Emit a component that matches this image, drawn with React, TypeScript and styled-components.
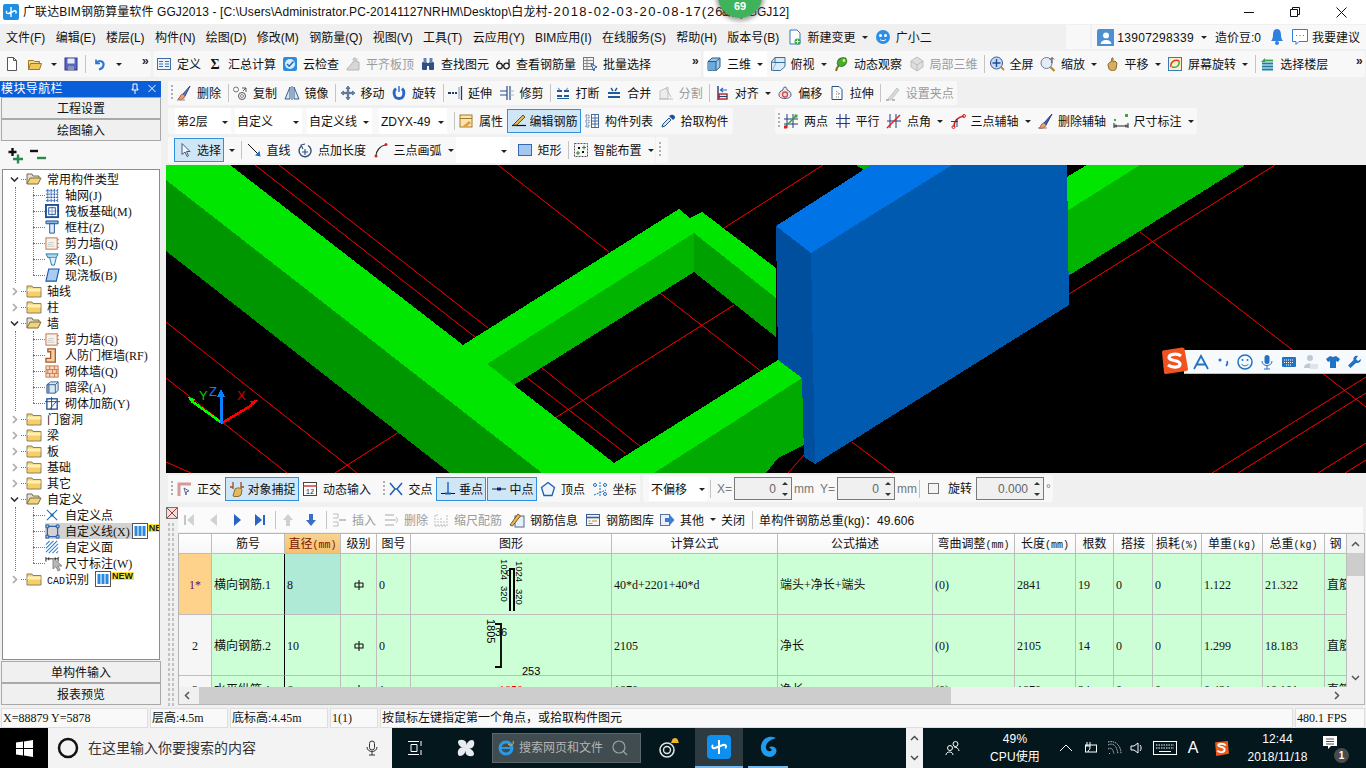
import React from "react";
import styled, { createGlobalStyle } from "styled-components";

const Global = createGlobalStyle`
  html, body { margin: 0; padding: 0; background: #f0f0f0; overflow: hidden; }
  * { box-sizing: border-box; }
`;

const UI = `"Liberation Sans", "Noto Sans CJK SC", sans-serif`;

const Window = styled.div`
  position: relative;
  width: 1366px;
  height: 768px;
  overflow: hidden;
  display: flex;
  flex-direction: column;
  background: #f0f0f0;
  color: #111;
  font: 12px/16px ${UI};
  white-space: nowrap;
`;
const TitleBar = styled.div`
  height: 24px;
  background: #fff;
  display: flex;
  align-items: center;
  padding-left: 3px;
  gap: 4px;
  font-size: 12px;
`;
const TitleText = styled.span`
  display: block;
`;
const TitleHead = styled.span`
  letter-spacing: 0.1px;
`;
const TitleSpan = styled.span<{ $ls?: number; $ml?: number; $fs?: number }>`
  letter-spacing: ${(p) => p.$ls ?? 0}px;
  margin-left: ${(p) => p.$ml ?? 0}px;
  font-size: ${(p) => p.$fs ?? 12}px;
`;
const WinControls = styled.div`
  margin-left: auto;
  padding-right: 2px;
  display: flex;
`;
const WinBtn = styled.div`
  width: 46px;
  height: 22px;
  display: flex;
  align-items: center;
  justify-content: center;
`;
const Badge = styled.div`
  position: absolute;
  left: 718px;
  top: -26px;
  width: 44px;
  height: 44px;
  border-radius: 50%;
  background: #3fb35c;
  box-shadow: 0 1px 4px 2px rgba(90, 90, 90, 0.55);
  color: #fff;
  font-weight: 700;
  font-size: 11px;
  text-align: center;
  padding-top: 25px;
  line-height: 14px;
`;
const MenuBar = styled.div`
  height: 26px;
  display: flex;
  align-items: center;
  padding-left: 6px;
  gap: 10.3px;
`;
const MenuText = styled.span`
  padding-top: 2px;
`;
const MenuTool = styled.div`
  display: flex;
  align-items: center;
  flex: none;
  gap: 5px;
  margin-left: -3px;
  & > span:not(:empty) {
    padding-top: 2px;
  }
`;
const GhostBox = styled.div`
  width: 24px;
  height: 24px;
  margin-left: auto;
  margin-right: 2px;
  background: #f8f8f8;
  flex: none;
`;
const UserBar = styled.div`
  height: 24px;
  display: flex;
  align-items: center;
  background: #f8f8f8;
  padding: 0 6px 0 5px;
  flex: none;
  margin-left: -10.3px;
`;
const PhoneText = styled.span`
  letter-spacing: 0.3px;
  margin: 2px 6px 0 3px;
`;
const UserText = styled.span<{ $ml: number; $mr: number }>`
  margin: 2px ${(p) => p.$mr}px 0 ${(p) => p.$ml}px;
`;
const IconPad = styled.span<{ $mr: number }>`
  margin-right: ${(p) => p.$mr}px;
  display: flex;
`;
const MainRow = styled.div`
  height: 30px;
  padding-top: 1px;
  display: flex;
  align-items: flex-start;
`;
const Group = styled.div<{ $w?: number; $h?: number; $ml?: number; $gap?: number; $pl?: number }>`
  display: flex;
  align-items: center;
  height: ${(p) => p.$h ?? 26}px;
  ${(p) => (p.$w ? `width:${p.$w}px;flex:none;` : "")}
  margin-left: ${(p) => p.$ml ?? 0}px;
  gap: ${(p) => p.$gap ?? 6.5}px;
  padding-left: ${(p) => p.$pl ?? 3}px;
  padding-right: 3px;
  background: #f8f8f8;
  border-radius: 2px;
`;
const Grip = styled.span`
  width: 2px;
  height: 16px;
  flex: none;
  margin-right: -3.5px;
  background: repeating-linear-gradient(to bottom, #b0b0b0 0 2px, transparent 2px 4px);
`;
const Sep = styled.span`
  width: 1px;
  height: 18px;
  flex: none;
  background: #c4c4c4;
  margin-right: -3px;
`;
const Caret = styled.span`
  width: 0;
  height: 0;
  flex: none;
  border-left: 3px solid transparent;
  border-right: 3px solid transparent;
  border-top: 3px solid #222;
  margin-left: 1px;
`;
const Tool = styled.div<{ $off?: boolean; $on?: boolean; $white?: boolean }>`
  display: flex;
  align-items: center;
  flex: none;
  gap: 5px;
  color: ${(p) => (p.$off ? "#9b9b9b" : "#111")};
  & > span:not(:empty) {
    padding-top: 2px;
  }
  ${(p) =>
    p.$on
      ? `height:24px;padding:0 2px 0 3px;margin:0 -3px 0 -3px;gap:3px;background:#cfe6f7;border:1px solid #2f8fe0;`
      : ""}
  ${(p) => (p.$white ? `height:26px;background:#fff;padding:0 4px 0 2px;margin:0 -4px 0 -2px;` : "")}
`;
const SigmaBox = styled.span`
  width: 16px;
  text-align: center;
  font: 700 14px/16px "Liberation Serif", serif;
`;
const More = styled.span`
  font: 700 12px/10px "Liberation Mono", monospace;
  height: 14px;
  color: #222;
  letter-spacing: -1px;
  margin-left: auto;
`;
const ComboRow = styled.div`
  display: flex;
  gap: 4px;
  flex: none;
`;
const Combo = styled.div<{ $w: number; $h?: number; $ml?: number }>`
  width: ${(p) => p.$w}px;
  height: ${(p) => p.$h ?? 24}px;
  margin-left: ${(p) => p.$ml ?? 0}px;
  flex: none;
  background: #fff;
  display: flex;
  align-items: center;
  justify-content: space-between;
  padding: 2px 3px 0 2px;
`;
const Workspace = styled.div`
  flex: none;
  height: 626px;
  display: flex;
`;
const Nav = styled.div`
  width: 161px;
  flex: none;
  padding-top: 1px;
  display: flex;
  flex-direction: column;
`;
const NavHead = styled.div`
  height: 16px;
  background: #0a5fd8;
  color: #fff;
  display: flex;
  align-items: center;
  padding: 0 5px 0 1px;
  justify-content: space-between;
  letter-spacing: 0.4px;
`;
const NavBtn = styled.div`
  height: 22px;
  margin: 0 0 0 1px;
  width: 160px;
  border: 1px solid #a9a9a9;
  background: #f0f0f0;
  text-align: center;
  line-height: 23px;
  font-size: 12px;
  flex: none;
`;
const NavTool = styled.div`
  height: 28px;
  display: flex;
  align-items: flex-start;
  gap: 4px;
  padding: 6px 0 0 7px;
  background: #f7f7f7;
`;
const Tree = styled.div`
  height: 491px;
  margin: 0 1px 1px 2px;
  background: #fff;
  border: 1px solid #8c8c8c;
  overflow: hidden;
  position: relative;
  padding-top: 1px;
`;
const TreeRow = styled.div`
  height: 16px;
  display: flex;
  align-items: center;
`;
const Chevron = styled.span`
  width: 13px;
  margin-left: 5px;
  flex: none;
  display: flex;
  justify-content: center;
`;
const Dots = styled.span<{ $w: number }>`
  width: ${(p) => p.$w}px;
  flex: none;
  border-top: 1px dotted #777;
`;
const TreeLabel = styled.span<{ $ml: number }>`
  margin-left: ${(p) => p.$ml}px;
  padding-top: 2px;
`;
const KidRow = styled(TreeRow)`
  padding-left: 30px;
`;
const SelWrap = styled.span<{ $sel?: boolean }>`
  display: flex;
  align-items: center;
  height: 16px;
  padding-right: 2px;
  ${(p) => (p.$sel ? "background:#d2d2d2;" : "")}
`;
const Kids = styled.div`
  position: relative;
  &::before {
    content: "";
    position: absolute;
    left: 30px;
    top: 0;
    bottom: 8px;
    border-left: 1px dotted #777;
  }
  &::after {
    content: "";
    position: absolute;
    left: 12px;
    top: 0;
    bottom: 0;
    border-left: 1px dotted #777;
  }
`;
const New = styled.span`
  background: #ffe23c;
  color: #1a1a1a;
  font: 700 9px/8px "Liberation Sans", sans-serif;
  height: 8px;
  padding: 0 1px;
  align-self: flex-start;
  margin-top: 1px;
  flex: none;
`;
const CursorMark = styled.svg`
  position: absolute;
  left: 49px;
  top: 387px;
`;
const Main = styled.div`
  margin-left: 5px;
  flex: 1;
  min-width: 0;
  padding-top: 1px;
  display: flex;
  flex-direction: column;
`;
const Row = styled.div<{ $h: number; $mb: number }>`
  height: ${(p) => p.$h}px;
  margin-bottom: ${(p) => p.$mb}px;
  display: flex;
  flex: none;
`;
const CanvasWrap = styled.div`
  position: relative;
  height: 308px;
  flex: none;
  background: #000;
  margin-bottom: 2px;
`;
const CanvasSvg = styled.svg`
  display: block;
`;
const Sogou = styled.div`
  position: absolute;
  left: 994px;
  top: 182px;
  width: 206px;
  height: 28px;
  display: flex;
  align-items: flex-end;
`;
const SogouLogo = styled.span`
  flex: none;
  z-index: 1;
  display: flex;
`;
const SogouBar = styled.div`
  margin-left: -4px;
  flex: 1;
  height: 24px;
  margin-bottom: 1px;
  background: #f7fafd;
  border-bottom: 1px solid #b4c6dc;
  display: flex;
  align-items: center;
  gap: 6px;
  padding-left: 9px;
`;
const Unit = styled.span<{ $c?: string }>`
  color: ${(p) => p.$c ?? "#777"};
  font-size: 12px;
`;
const SpinBox = styled.div<{ $w: number }>`
  width: ${(p) => p.$w}px;
  height: 23px;
  flex: none;
  border: 1px solid #7a7a7a;
  background: #f0f0f0;
  color: #666;
  display: flex;
  align-items: center;
  justify-content: flex-end;
  gap: 6px;
  padding-right: 3px;
  font-size: 12px;
`;
const SpinArrows = styled.span`
  display: flex;
  flex-direction: column;
  gap: 8px;
`;
const ArrowUp = styled.span`
  border-left: 3px solid transparent;
  border-right: 3px solid transparent;
  border-bottom: 3px solid #333;
`;
const ArrowDown = styled.span`
  border-left: 3px solid transparent;
  border-right: 3px solid transparent;
  border-top: 3px solid #333;
`;
const Check = styled.span`
  width: 11px;
  height: 11px;
  border: 1px solid #777;
  background: #f4f4f4;
  flex: none;
`;
const Space = styled.span<{ $w: number }>`
  margin-left: ${(p) => p.$w}px;
  flex: none;
`;
const RebarArea = styled.div`
  display: flex;
  flex: 1;
  min-height: 0;
`;
const Handle = styled.div`
  width: 12px;
  flex: none;
  display: flex;
  flex-direction: column;
  align-items: flex-start;
  gap: 3px;
  padding-top: 1px;
`;
const HandleDots = styled.div`
  flex: 1;
  width: 8px;
  margin-left: 1px;
  background-image: radial-gradient(#c2c2c2 1px, transparent 1px);
  background-size: 4px 5px;
`;
const RebarCol = styled.div`
  flex: 1;
  display: flex;
  flex-direction: column;
  min-width: 0;
`;
const RebarBar = styled.div`
  height: 25px;
  width: 1185px;
  margin-top: 1px;
  margin-bottom: 1px;
  background: #fbfbfb;
  display: flex;
  align-items: center;
  gap: 7px;
  padding-left: 3px;
  flex: none;
`;
const BarText = styled.span`
  padding-top: 2px;
`;
const TotalText = styled.span`
  padding-top: 2px;
  margin-left: 2px;
  letter-spacing: 0.1px;
`;
const FirstIcon = styled.span`
  display: flex;
  margin-right: 2px;
`;
const IconCell = styled.span<{ $w: number }>`
  width: ${(p) => p.$w}px;
  flex: none;
  display: flex;
  justify-content: center;
`;
const TableFrame = styled.div`
  width: 1187px;
  height: 172px;
  border: 1px solid #b5b5b5;
  margin-left: 0;
  flex: none;
  background: #fff;
  display: flex;
  flex-direction: column;
`;
const TableTop = styled.div`
  height: 153px;
  display: flex;
  flex: none;
`;
const GridBox = styled.div`
  width: 1168px;
  flex: none;
  overflow: hidden;
`;
const COLS = "33px 73px 56px 36px 34px 201px 166px 155px 82px 61px 38px 39px 49px 61px 62px 22px";
const TRow = styled.div<{ $h: number }>`
  display: grid;
  grid-template-columns: ${COLS};
  height: ${(p) => p.$h}px;
`;
const Th = styled.div<{ $active?: boolean }>`
  background: ${(p) => (p.$active ? "linear-gradient(#f8d491,#f5c070)" : "linear-gradient(#fff,#f6f6f6)")};
  color: ${(p) => (p.$active ? "#7a1500" : "#111")};
  border-right: 1px solid #bdbdbd;
  border-bottom: 1px solid #bdbdbd;
  text-align: center;
  line-height: 21px;
  overflow: hidden;
`;
const Td = styled.div<{ $bg?: string; $center?: boolean; $split?: boolean }>`
  background: ${(p) => p.$bg ?? "#ccffd5"};
  border-right: 1px solid ${(p) => (p.$split ? "#000" : "#bdbdbd")};
  border-bottom: 1px solid #bdbdbd;
  display: flex;
  align-items: center;
  justify-content: ${(p) => (p.$center ? "center" : "flex-start")};
  padding-left: ${(p) => (p.$center ? 0 : 2)}px;
  padding-top: 1px;
  overflow: hidden;
  position: relative;
`;
const VScroll = styled.div`
  width: 17px;
  background: #f0f0f0;
  display: flex;
  flex-direction: column;
  align-items: center;
  padding: 7px 0 6px;
`;
const VThumb = styled.div`
  width: 17px;
  height: 23px;
  background: #cdcdcd;
  margin-top: 6px;
  margin-bottom: auto;
`;
const HScroll = styled.div`
  height: 17px;
  flex: none;
  background: #f0f0f0;
  display: flex;
  align-items: center;
  padding: 0 24px 0 5px;
`;
const HThumb = styled.div`
  width: 752px;
  height: 17px;
  background: #cdcdcd;
  margin-left: 9px;
  margin-right: auto;
`;
const StatusBar = styled.div`
  height: 20px;
  margin-top: 2px;
  flex: none;
  display: flex;
  gap: 2px;
  padding-left: 1px;
`;
const StatusCell = styled.div<{ $w: number }>`
  width: ${(p) => p.$w}px;
  flex: none;
  background: #f9f9f9;
  border: 1px solid #dedede;
  padding-left: 1px;
  line-height: 19px;
`;
const Taskbar = styled.div`
  height: 40px;
  flex: none;
  display: flex;
  align-items: center;
  background: #03171d;
  color: #fff;
`;
const Start = styled.div`
  width: 48px;
  height: 40px;
  background: #000;
  display: flex;
  align-items: center;
  justify-content: center;
`;
const Search = styled.div`
  width: 344px;
  height: 40px;
  background: #f3f3f3;
  color: #333;
  display: flex;
  align-items: center;
  font-size: 14px;
  padding-left: 9px;
  gap: 9px;
`;
const MicBox = styled.span`
  margin-left: auto;
  margin-right: 12px;
  display: flex;
`;
const TaskItem = styled.div<{ $w: number; $ml?: number; $active?: boolean; $under?: boolean }>`
  width: ${(p) => p.$w}px;
  height: 40px;
  margin-left: ${(p) => p.$ml ?? 0}px;
  flex: none;
  display: flex;
  align-items: center;
  justify-content: center;
  ${(p) => (p.$active ? "background:#2d3b41;" : "")}
  ${(p) => (p.$under ? "border-bottom:2px solid #76b9ed;" : "")}
`;
const IESearch = styled.div`
  width: 149px;
  height: 30px;
  margin-left: 2px;
  flex: none;
  background: #414c50;
  border: 1px solid #5c676b;
  color: #b5b5b5;
  display: flex;
  align-items: center;
  padding-left: 3px;
  gap: 3px;
  font-size: 12px;
`;
const ScrollBox = styled.div`
  width: 17px;
  height: 40px;
  margin-left: 118px;
  background: #f2f2f2;
  display: flex;
  flex-direction: column;
  align-items: center;
  justify-content: space-around;
`;
const TwoLine = styled.div<{ $w: number; $ml: number }>`
  width: ${(p) => p.$w}px;
  margin-left: ${(p) => p.$ml}px;
  flex: none;
  text-align: center;
  line-height: 18px;
  font-size: 12px;
  letter-spacing: 0.1px;
`;
const BigA = styled.span`
  font-size: 16px;
  width: 16px;
  margin-left: 8px;
  flex: none;
  text-align: center;
`;
const Notify = styled.div`
  position: relative;
  width: 24px;
  margin-left: 12px;
  height: 30px;
`;
const NotifyCount = styled.span`
  position: absolute;
  right: -3px;
  bottom: 0;
  width: 15px;
  height: 15px;
  border-radius: 50%;
  background: #4a4a4a;
  color: #fff;
  font-size: 10px;
  line-height: 15px;
  text-align: center;
  font-weight: 700;
`;
const Lat = styled.span`
  font: 12px/14px "Liberation Serif", serif;
`;
const MonoLat = styled.span`
  font: 10px/12px "Liberation Mono", monospace;
`;

const mix = (s: string) =>
  s.split(/([\x00-\x7f]+)/).map((p, i) => (i % 2 ? <Lat key={i}>{p}</Lat> : p));

const Svg = ({ s = 16, w, h, vb = "0 0 16 16", children }: { s?: number; w?: number; h?: number; vb?: string; children: React.ReactNode }) => (
  <svg width={w ?? s} height={h ?? s} viewBox={vb} style={{ flex: "none", display: "block" }} fill="none">
    {children}
  </svg>
);

const ICONS: Record<string, React.ReactNode> = {
  doc: <path d="M3.5 1.5h6l3 3v10h-9z M9.5 1.5v3h3" fill="#fff" stroke="#555" />,
  open: <><path d="M1.5 13.5v-9h5l1 1h5v2" fill="#f3d98c" stroke="#9a7a26" /><path d="M1.5 13.5l2-6h11l-2 6z" fill="#f1c65b" stroke="#9a7a26" /></>,
  save: <><rect x="2" y="2" width="12" height="12" fill="#5a67c8" stroke="#2d367e" /><rect x="4.5" y="2.5" width="7" height="5" fill="#e8ecfa" /><rect x="5" y="10" width="6" height="4" fill="#8d93a8" /></>,
  undo: <><path d="M5 3.5v4h4" stroke="#2d6fc4" strokeWidth="1.6" /><path d="M5.5 7C8 3.5 13 5 12.5 9c-.3 2.4-2 3.8-4.5 4.5" stroke="#2d7bd8" strokeWidth="2.2" /></>,
  define: <><rect x="1.5" y="2.5" width="13" height="11" fill="#eaf1fa" stroke="#3f6fa8" /><path d="M3 5.5h4M3 8h4M3 10.5h4M9 5.5h4M9 8h4M9 10.5h4" stroke="#3f6fa8" /></>,
  cloud: <><rect x="1" y="1" width="14" height="14" rx="2" fill="#2c8ddf" /><circle cx="8" cy="8" r="5" fill="#d8eefc" /><path d="M5 8l2.2 2.2L11.5 5.5" stroke="#1d6fc0" strokeWidth="1.6" /></>,
  flat: <><path d="M2 13l7-8 5 1v8H2z" fill="#d7d7d7" stroke="#b5b5b5" /><path d="M9 1l4 2-2 3-4-2z" fill="#c8c8c8" /></>,
  binoc: <><rect x="2" y="6" width="5" height="8" rx="1" fill="#30507f" /><rect x="9" y="6" width="5" height="8" rx="1" fill="#30507f" /><rect x="3.5" y="2" width="3" height="5" fill="#6783ad" /><rect x="9.5" y="2" width="3" height="5" fill="#6783ad" /><rect x="7" y="7" width="2" height="3" fill="#30507f" /></>,
  glass: <><circle cx="4.5" cy="10" r="2.8" stroke="#222" strokeWidth="1.3" /><circle cx="11.5" cy="10" r="2.8" stroke="#222" strokeWidth="1.3" /><path d="M7 9.5h2M2 9C2.500 6 3.500 5 5 5M14 9V3" stroke="#222" strokeWidth="1.2" /></>,
  batch: <><rect x="1.500" y="1.500" width="10" height="12" fill="#f3f3f3" stroke="#777" /><path d="M1.500 4.500h10M1.500 7.500h10M1.500 10.500h10M5 1.500v12" stroke="#888" /><path d="M9 8l6 3-2.500 1L12 15z" fill="#fff" stroke="#2f5c99" /></>,
  cube: <><path d="M2 5.500l4-3.500h8v9l-4 3.500H2z" fill="#9cc8e8" stroke="#2e5e88" /><path d="M2 5.500h8v9H2z" fill="#6fa8d4" /><path d="M2 5.500h8v9M10 5.500l4-3.500" stroke="#2e5e88" /></>,
  top: <><path d="M5 1.500h10v9l-4.500 4H1.500v-9z" fill="#dbeaf6" stroke="#3b6e98" /><path d="M5 1.500v5l-3.500-.5M5 6.500h10" stroke="#3b6e98" /><path d="M2 15l4-8" stroke="#8ab2d0" /></>,
  orbit: <><path d="M3 15c1-5 5-9 10-13" stroke="#6d7a2d" strokeWidth="2" /><ellipse cx="9" cy="6" rx="5" ry="4" fill="#46ad34" stroke="#2d7a22" transform="rotate(-30 9 6)" /><circle cx="11" cy="4.500" r="1.400" fill="#e8f54a" /></>,
  local: <><path d="M8 1l6 4v6l-6 4-6-4V5z" fill="#dedede" stroke="#bdbdbd" /><path d="M2 5l6 4 6-4M8 9v6" stroke="#bdbdbd" /></>,
  full: <><circle cx="7.500" cy="7" r="6" fill="#c8daf2" stroke="#385a90" /><path d="M7.500 3v8M3.500 7h8" stroke="#1d4d9c" strokeWidth="1.400" /><path d="M12 11l3 3" stroke="#c88d2a" strokeWidth="2" /></>,
  zoom: <><circle cx="6.500" cy="7" r="5.500" fill="#e4ecf6" stroke="#6a7f98" /><path d="M10.500 11l4 4" stroke="#b48422" strokeWidth="2.200" /><path d="M12 2v5M10 3.500l2-2 2 2" stroke="#444" /></>,
  pan: <><path d="M4 9c0-2 2-3 3-3l1-4 1 0 0 4 2-1 1 1 1 1-1 6c-1 2-6 2-7 0z" fill="#d9ad5e" stroke="#8a6a2c" /></>,
  srot: <><rect x="1.500" y="1.500" width="13" height="13" fill="#fbeec4" stroke="#3a79b8" /><path d="M4 11C3 6 8 3 12 5" stroke="#d8392c" strokeWidth="1.500" /><path d="M12 5c1 5-3 7-7 6" stroke="#3cae54" strokeWidth="1.500" /></>,
  floors: <><path d="M3 13.500h11M3 10.500h11M3 7.500h11" stroke="#1f7ea3" strokeWidth="1.800" /><path d="M5 4.500h9" stroke="#36a04a" strokeWidth="1.800" /><path d="M6 2L2 6l4 0" fill="#36a04a" /></>,
  erase: <><path d="M14 1L7 9l2 2z" fill="#5975c9" stroke="#2d4690" /><path d="M7 9c-2 0-3 2-3 3l-2 2c3 1 6 0 7-3z" fill="#e0a080" stroke="#b45c3c" /><path d="M1 15h8" stroke="#888" /></>,
  copy: <><circle cx="4" cy="4.500" r="2.500" stroke="#777" /><circle cx="10" cy="11" r="3.500" stroke="#555" /><circle cx="10" cy="11" r="1.500" stroke="#888" /><path d="M10 3h4v4M14 3l-3 3" stroke="#555" /></>,
  mirror: <><path d="M6 2L1 14h5zM10 2l5 12h-5z" fill="#d8e4f0" stroke="#33608f" /><path d="M8 1v14" stroke="#33608f" /></>,
  move: <path d="M8 1l2 2.500H8.700V7.300H12.500V6L15 8l-2.500 2V8.700H8.700v3.800H10L8 15l-2-2.500h1.300V8.700H3.500V10L1 8l2.500-2v1.300h3.800V3.500H6z" fill="#6f89ad" stroke="#2f4d73" strokeWidth=".6" />,
  rotate: <><path d="M5 3.500C1.800 6 2.500 13.500 8 13.500s6-7.500 3-10" stroke="#2a66c9" strokeWidth="2.800" /><path d="M8 1v6" stroke="#2a66c9" strokeWidth="1.400" /></>,
  extend: <><path d="M14.500 1v14" stroke="#1f3d70" strokeWidth="1.300" /><path d="M12 2v12" stroke="#7d94b6" /><path d="M1 8h3" stroke="#1f3d70" strokeWidth="2" /><path d="M5 8h2M8 8h2" stroke="#1f3d70" strokeWidth="2" strokeDasharray="2 1" /></>,
  trim: <><path d="M8 1v14M11 1v14" stroke="#2a4f86" strokeWidth="1.200" /><path d="M1 6h7M1 10h7" stroke="#2a4f86" strokeWidth="1.200" /><path d="M11 6h4M11 10h4" stroke="#9fb2cd" strokeWidth="1.200" /></>,
  brk: <><path d="M2 6h5M9 6h5M2 11h5M9 11h5" stroke="#1f5a99" strokeWidth="1.800" /><path d="M3 3l2 2M13 3l-2 2" stroke="#7aa3cf" strokeWidth="1.200" /><path d="M2 13.500h12" stroke="#1f5a99" /></>,
  merge: <><path d="M2 8h12M2 12h12" stroke="#1f5a99" strokeWidth="1.800" /><path d="M5 3l2 3M11 3l-2 3" stroke="#1f5a99" strokeWidth="1.400" /></>,
  split: <><path d="M2 14V6l8-4v12z" fill="#ececec" stroke="#c4c4c4" /><path d="M1 14h14M8 3l5 9" stroke="#bdbdbd" /></>,
  align: <><path d="M4 1v14" stroke="#1f3d70" strokeWidth="1.400" /><rect x="5" y="9" width="8" height="5" fill="#fff" stroke="#b02020" strokeWidth="1.400" /><path d="M13 5H7M9 3L6.500 5 9 7" stroke="#2a66c9" strokeWidth="1.200" /><path d="M5 11.500h8" stroke="#1f3d70" strokeWidth="1.200" /></>,
  offset: <><path d="M8 2c2 0 2 3 2 3 3 1 4 3 4 5s-2 3.500-6 3.500S2 12 2 10s1-4 4-5c0 0 0-3 2-3z" fill="#f8e0e0" stroke="#3a5f95" /><circle cx="8" cy="9.500" r="2.500" stroke="#d8483c" strokeWidth="1.300" /></>,
  stretch: <><path d="M3 1.500h7l3 3v10H3z" fill="#fff" stroke="#26508a" /><path d="M7 6l4 3M7 9h3M7 12h3" stroke="#777" strokeDasharray="1 1" /></>,
  gripset: <><path d="M3 14L12 3l2 2-8 10z" fill="#d8d8d8" stroke="#c4c4c4" /><path d="M1 15h3M7 15h3" stroke="#b8b8b8" strokeWidth="2" /></>,
  attr: <><rect x="2" y="2" width="12" height="12" fill="#fbe6b0" stroke="#a57a26" /><path d="M2 5.500h12" stroke="#a57a26" /><path d="M5 13l6-5 2 2-5 4z" fill="#e89a3c" /></>,
  edit: <><path d="M1 12.500h14" stroke="#111" strokeWidth="1.200" /><path d="M2 12L12 2l2 2L6 12z" fill="#e7b757" stroke="#6a4f12" /></>,
  list: <><path d="M2 2h3v3H2zM2 7h3v3H2zM2 12h3v2H2z" stroke="#4a6a99" strokeDasharray="1 .6" /><rect x="7.500" y="1.500" width="7" height="13" fill="#fff" stroke="#4a6a99" /><path d="M7.500 5h7M7.500 8h7M7.500 11h7M11 1.500v13" stroke="#4a6a99" /></>,
  pick: <><path d="M2 14l1-3 6-6 2 2-6 6z" fill="#d4e6f8" stroke="#204f8a" /><path d="M9 3l4 4 1.500-1.500c1-1 .5-2-.5-3s-2-1-3-.5z" fill="#1d4f9c" /></>,
  two: <><path d="M4 1v14M10 1v14M1 6h14M1 11h14" stroke="#243a80" /><path d="M2 14L13 3" stroke="#3d9c38" strokeWidth="1.400" /><rect x="1" y="12.500" width="3" height="3" fill="#d22" /><rect x="11.500" y="1.500" width="3" height="3" fill="#3ba53a" /></>,
  par: <path d="M5 1v14M11 1v14M1 5.500h14M1 10.500h14" stroke="#243a80" strokeWidth="1.100" />,
  ang: <><path d="M4 1v14M10 1v14M1 8h14" stroke="#243a80" /><path d="M1 15L14 2" stroke="#d22" strokeWidth="1.500" /></>,
  arc3: <><path d="M4 14C4 8 8 4 14 3" stroke="#c22" strokeWidth="1.500" /><path d="M1 8.500h7M7 14V6" stroke="#243a80" /><circle cx="3.500" cy="14" r="1.500" stroke="#d22" /><circle cx="14" cy="3" r="1.500" stroke="#d22" /></>,
  delax: <><path d="M15 1L7 10l2 2z" fill="#3f62bd" stroke="#233e86" /><path d="M7 10c-2 0-3 2-3 3l-2 2c3 1 6 0 7-3z" fill="#dfa37e" stroke="#b45c3c" /><path d="M1 15h9" stroke="#888" /></>,
  dim: <><path d="M1 10v5M15 10v5M1 13h14" stroke="#222" /><path d="M3 11.500v3M13 11.500v3" stroke="#222" /><rect x="1" y="6" width="2" height="2" fill="#3ba53a" /><rect x="12" y="1" width="3" height="3" fill="#3ba53a" /></>,
  cursor: <path d="M4 1.500v11l3-2.500 2 4.500 1.500-.7-2-4.300h3.500z" fill="#f2f6fb" stroke="#45597a" />,
  line: <><path d="M2 2l10.500 10.500" stroke="#111" strokeWidth="1" /><path d="M14.500 14.500L13.600 9 9 13.600z" fill="#1f6fc4" /></>,
  ptlen: <><path d="M11 3.500a6 6 0 1 1-7 .8" stroke="#2f4d73" strokeWidth="1.400" /><path d="M8 2L4 3l2 4M8 7v6M5 10h6" stroke="#2f4d73" strokeWidth="1.100" /></>,
  arc: <><path d="M3 14C3 9 7 4 12 3" stroke="#333" strokeWidth="1.200" /><circle cx="3" cy="14" r="1.500" fill="#d22" /><circle cx="13" cy="2.500" r="1.500" fill="#d22" /></>,
  rect: <rect x="1.500" y="2.500" width="13" height="11" fill="#a5c7ef" stroke="#3369b5" />,
  smart: <><rect x="1.500" y="1.500" width="13" height="13" fill="#f6f6f6" stroke="#555" strokeDasharray="2 1" /><path d="M5 5h2v2H5zM9 9h2v2H9z" fill="#111" /><path d="M11 3.500v4M9 5.500h4M5 9v4M3 11h4" stroke="#1b8a2e" /></>,
  ortho: <><path d="M3 15V3h12" stroke="#d59a9a" strokeWidth="3" /><path d="M8 7l5 3-2.500.8L10 14z" fill="#fff" stroke="#5a6b8c" /></>,
  snap: <><path d="M4 1v7M12 1v7M1 6h3M12 6h3" stroke="#a54a1c" strokeWidth="1.300" /><path d="M4 15l2-7c3-2 6-1 7 1l-1 5c-2 2-6 2-8 1z" fill="#e4b95e" stroke="#8a6a2c" /></>,
  dyn: <><rect x="1.500" y="1.500" width="13" height="13" fill="#fff" stroke="#444" /><path d="M1.500 5h13" stroke="#d44" strokeWidth="1.600" /><text x="8" y="13" textAnchor="middle" fontSize="7" fill="#222" fontFamily="Liberation Mono">12</text></>,
  cross: <path d="M2 2l5 6-5 6M14 2L9 8l5 6M7 8h2" stroke="#1e5fb4" strokeWidth="1.500" />,
  perp: <><path d="M8 1v11" stroke="#1f5fb0" strokeWidth="1.400" /><path d="M1 12.500h14" stroke="#111" /><path d="M5 12.500h6" stroke="#1f5fb0" strokeWidth="2" /></>,
  mid: <><path d="M1 8h14" stroke="#33465f" strokeWidth="1.200" /><rect x="6" y="6.500" width="4" height="3" fill="#111e6d" /></>,
  vertex: <path d="M8 1.500l6.500 5-2.500 8H4l-2.500-8z" fill="#eef4fb" stroke="#1e5fb4" strokeWidth="1.300" />,
  coord: <><path d="M8 1v14M2 14l12-5" stroke="#1e6fc4" strokeDasharray="2 1" /><circle cx="3" cy="4" r="1.500" stroke="#1e6fc4" /><circle cx="13" cy="4" r="1.500" stroke="#1e6fc4" /><circle cx="13" cy="13" r="1.500" stroke="#1e6fc4" /></>,
  first: <><path d="M4 3v10" stroke="#c5c5c5" strokeWidth="2" /><path d="M13 2L6 8l7 6z" fill="#d2d2d2" /></>,
  prev: <path d="M11 2L4 8l7 6z" fill="#d2d2d2" />,
  next: <path d="M5 2l7 6-7 6z" fill="#2a63c4" />,
  last: <><path d="M3 2l7 6-7 6z" fill="#2a63c4" /><path d="M12 3v10" stroke="#2a63c4" strokeWidth="2" /></>,
  up: <path d="M8 2l5 6H10v6H6V8H3z" fill="#d0d0d0" />,
  down: <path d="M8 14l5-6H10V2H6v6H3z" fill="#3a6fc9" />,
  insert: <><path d="M2 2h5v4H2M2 10h5v4H2" stroke="#bdbdbd" /><path d="M8 8h7" stroke="#c4c4c4" strokeWidth="2" /></>,
  del: <><path d="M2 3h9M2 8h11M2 13h9" stroke="#c4c4c4" strokeWidth="1.500" /><path d="M13 5l2 3-2 3" stroke="#c4c4c4" /></>,
  scale: <path d="M2 14V3h3M2 14h12M5 14V7M8 14V5M11 14V8M14 14V2" stroke="#bdbdbd" strokeDasharray="2 1" />,
  info: <><rect x="6" y="4" width="9" height="11" fill="#e9eef7" stroke="#4a6a99" /><path d="M1 13L9 2l2.500 2-8 10z" fill="#e6b860" stroke="#7a5d1c" /></>,
  lib: <><rect x="1.500" y="2.500" width="13" height="11" fill="#f5f5f5" stroke="#3a5f95" /><path d="M1.500 5.500h13" stroke="#3a5f95" strokeWidth="1.600" /><path d="M3.500 9h2M7 9h5M3.500 11.500h4" stroke="#c48a2c" /></>,
  other: <><rect x="1.500" y="2.500" width="9" height="11" fill="#e9eef7" stroke="#5a7198" /><path d="M6 6h5V3l4.500 5L11 13v-3H6z" fill="#3c7dd8" /></>,
  closeX: <><rect x=".5" y=".5" width="11" height="11" fill="#f2dddd" stroke="#777" /><path d="M1 1l10 10M11 1L1 11" stroke="#a33" /></>,
};
const Ic = ({ n, s }: { n: string; s?: number }) => <Svg s={s}>{ICONS[n]}</Svg>;

const TREE: Record<string, React.ReactNode> = {
  grid: <><path d="M1 3h13M1 6.500h13M1 10h13M1 13.500h13M3 1v14M6.500 1v14M10 1v14M13.500 1v14" stroke="#1e55a8" strokeDasharray="2 .6" /></>,
  raft: <><rect x="1" y="1" width="13" height="13" stroke="#1e4f98" strokeWidth="2" /><rect x="4" y="4" width="7" height="7" fill="#fff" stroke="#1e4f98" /><path d="M1 7.500h13M7.500 1v13" stroke="#1e4f98" strokeDasharray="1 1" /></>,
  col: <><path d="M1 1h13v3H1z" fill="#8ab3de" stroke="#1e4f98" /><path d="M5 4h5v10H5z" fill="#dfeafa" stroke="#1e4f98" /></>,
  shear: <><rect x="1" y="2" width="12" height="12" fill="#f8f2ec" stroke="#c07040" /><path d="M3 11h8M3 9h6M4 7h5" stroke="#aaa" strokeDasharray="1 1" /><path d="M13 4h2M13 8h2M13 12h2" stroke="#e07030" /></>,
  beam: <><path d="M1 2h13l-2 4H3z" fill="#a8d4ec" stroke="#1e79a8" /><path d="M5 6l2 8h3l2-8" fill="#dff0fa" stroke="#1e79a8" /></>,
  slab: <path d="M4 1h11l-3 13H1z" fill="#a9ccf2" stroke="#1e55a8" strokeWidth="1.200" />,
  door: <path d="M3 1h8v14H1v-4h5V4H3z" fill="#f5cfa8" stroke="#a85a28" strokeWidth="1.400" />,
  brick: <><rect x="1" y="2" width="13" height="12" fill="#f7d8c0" stroke="#c87848" /><path d="M1 6h13M1 10h13M5 2v4M10 2v4M3 6v4M8 6v4M12 6v4M5 10v4M10 10v4" stroke="#c87848" /></>,
  dark: <><path d="M2 5l4-3h8v9l-3 3H2z" fill="#dbe8f4" stroke="#33608f" /><path d="M2 5h3v9H2z" fill="#6a8fb5" /><path d="M2 5h9v9M11 5l3-3" stroke="#33608f" /></>,
  rein: <><rect x="2" y="3" width="11" height="11" stroke="#1e4f98" strokeWidth="1.400" /><path d="M0 6h16M5 14l7-8M7 1v14" stroke="#1e4f98" /></>,
  xpt: <><path d="M2 2l11 11M13 2L2 13" stroke="#1f6fb8" strokeWidth="1.200" /><rect x="6" y="6" width="3" height="3" fill="#1f6fb8" /></>,
  xline: <><rect x="2.500" y="2.500" width="11" height="11" stroke="#1e55a8" strokeWidth="1.200" /><path d="M1 1h3v3H1zM12 1h3v3h-3zM1 12h3v3H1zM12 12h3v3h-3z" fill="#a8c4f0" stroke="#1e55a8" /></>,
  xface: <><rect x="1" y="1" width="13" height="13" fill="#fff" /><path d="M1 5l4-4M1 9l8-8M1 13L13 1M4 14L14 4M8 14l6-6M12 14l2-2" stroke="#2a78d0" strokeWidth="1.100" /></>,
  dim2: <path d="M1 1v5M14 1v5M1 3h13M4 1.500v3M11 1.500v3" stroke="#222" />,
};

const Folder = ({ open }: { open?: boolean }) =>
  open ? (
    <Svg s={16}>
      <path d="M1 13V3h5l1 2h6v2" fill="#e8e0c8" stroke="#6d6a5d" />
      <path d="M1 13l3-6h11l-3 6z" fill="#f2d27a" stroke="#7d6d3d" />
    </Svg>
  ) : (
    <Svg s={16}>
      <path d="M1 3h5l1 1.500h8V14H1z" fill="#f7cf62" stroke="#8a8168" />
      <path d="M1.500 5.500h13v3h-13z" fill="#fff1bd" />
    </Svg>
  );
const ChevIcon = ({ open }: { open?: boolean }) => (
  <Svg w={9} h={9} vb="0 0 9 9">
    <path d={open ? "M1 2.500l3.500 3.500L8 2.500" : "M3 1l3.500 3.500L3 8"} stroke={open ? "#333" : "#aaa"} strokeWidth="1.600" />
  </Svg>
);
const Cols = () => (
  <Svg s={16}>
    <rect x=".5" y=".5" width="15" height="15" fill="#fff" stroke="#555" />
    <path d="M2.500 3h3v10h-3zM6.500 3h3v10h-3zM10.500 3h3v10h-3z" fill="#2a8ae0" />
  </Svg>
);
const Root = ({ label, open, extra }: { label: React.ReactNode; open?: boolean; extra?: React.ReactNode }) => (
  <TreeRow>
    <Chevron><ChevIcon open={open} /></Chevron>
    <Dots $w={5} />
    <Folder open={open} />
    <TreeLabel $ml={5}>{label}</TreeLabel>
    {extra}
  </TreeRow>
);
const Kid = ({ icon, label, sel, extra }: { icon: string; label: string; sel?: boolean; extra?: React.ReactNode }) => (
  <KidRow>
    <Dots $w={12} />
    <SelWrap $sel={sel}>
      <Svg s={15}>{TREE[icon]}</Svg>
      <TreeLabel $ml={5}>{mix(label)}</TreeLabel>
    </SelWrap>
    {extra}
  </KidRow>
);

const T = ({ i, t, caret, off, on, white }: { i: string; t: string; caret?: boolean; off?: boolean; on?: boolean; white?: boolean }) => (
  <Tool $off={off} $on={on} $white={white}>
    <Ic n={i} />
    <span>{t}</span>
    {caret && <Caret />}
  </Tool>
);

const Axis = () => (
  <g>
    <path d="M56 258L27 237" stroke="#00ff00" strokeWidth="2.500" />
    <path d="M22 232l7 2-3 5z" fill="#00ff00" />
    <path d="M56 258L86 240" stroke="#ff0000" strokeWidth="2.500" />
    <path d="M92 235l-8 1 3 5z" fill="#ff0000" />
    <path d="M55 258V231" stroke="#0a82ff" strokeWidth="3" />
    <path d="M55 224l-4 8h8z" fill="#0a82ff" />
    <text x="33" y="235" fill="#00d000" fontSize="13" fontFamily="Liberation Sans">Y</text>
    <text x="43" y="231" fill="#0a82ff" fontSize="13" fontFamily="Liberation Sans">Z</text>
    <text x="71" y="235" fill="#d00000" fontSize="13" fontFamily="Liberation Sans">X</text>
  </g>
);

const RED: number[][] = [
  [89, 0, 309, 172], [113, 0, 322, 163], [332, 0, 443, 87], [494, 128, 596, 207], [686, 277, 727, 308],
  [657, 0, 558, 63], [568, 140, 389, 253], [233, 267, 169, 308], [638, 290, 622, 308],
  [376, 203, 475, 282], [360, 212, 459, 288], [0, 157, 191, 308], [0, 213, 121, 308], [0, 297, 25, 308],
  [1109, 0, 903, 129], [974, 67, 1200, 242], [1200, 212, 1046, 308], [1200, 228, 1072, 308],
  [1200, 278, 1152, 308], [1200, 295, 1179, 308],
];

const Canvas = () => (
  <CanvasSvg width={1200} height={308} viewBox="0 0 1200 308" shapeRendering="crispEdges">
    <rect width="1200" height="308" fill="#000" />
    {RED.map((r, i) => (
      <line key={i} x1={r[0]} y1={r[1]} x2={r[2]} y2={r[3]} stroke="#ff0000" strokeWidth="1" shapeRendering="auto" />
    ))}
    <polygon points="0,15 0,86 284,308 376,308" fill="#009600" />
    <polygon points="321,199 528,68 528,107 348,220" fill="#00b400" />
    <polygon points="297,180 513,44 528,68 321,199" fill="#00e600" />
    <polygon points="528,68 610,133 610,172 528,107" fill="#00a000" />
    <polygon points="513,44 524,53 536,47 610,103 610,133 528,68" fill="#00e600" />
    <polygon points="636,213 488,308 600,308 612,293 638,280" fill="#00aa00" />
    <polygon points="0,0 64,0 297,180 348,220 448,298 612,195 636,213 488,308 376,308 0,15" fill="#00e600" />
    <polygon points="690,0 705,0 698,5" fill="#00b400" />
    <polygon points="901,46 974,0 1079,0 902,111" fill="#00b400" />
    <polygon points="901,12 921,0 974,0 901,46" fill="#00e600" />
    <polygon points="610,61 645,88 649,299 638,292 636,213 612,195" fill="#004f9e" />
    <polygon points="610,61 705,0 786,0 645,88" fill="#0073e6" />
    <polygon points="645,88 786,0 901,0 903,140 649,299" fill="#005ab0" />
    <Axis />
  </CanvasSvg>
);

const headers = ["", "筋号", "直径(mm)", "级别", "图号", "图形", "计算公式", "公式描述", "弯曲调整(mm)", "长度(mm)", "根数", "搭接", "损耗(%)", "单重(kg)", "总重(kg)", "钢"];
const headerText = (s: string) =>
  s.split(/(\(.*\))/).map((p, i) => (i % 2 ? <MonoLat key={i}>{p}</MonoLat> : p));

const Grade = () => (
  <Svg w={10} h={10} vb="0 0 10 10">
    <path d="M5 0v10M1 3v4h8V3M1 3h8" stroke="#111" strokeWidth="1.100" />
  </Svg>
);

const ShapeOne = () => (
  <Svg w={200} h={60} vb="0 0 200 60">
    <path d="M99 56V14h4v42" stroke="#000" strokeWidth="2" />
    <g fontFamily="Liberation Sans" fontSize="9.500" fill="#000">
      <text transform="translate(90,4) rotate(90)">1024</text>
      <text transform="translate(90,31) rotate(90)">320</text>
      <text transform="translate(105,6) rotate(90)">1024</text>
      <text transform="translate(105,34) rotate(90)">320</text>
      <text x="95" y="21">0</text>
    </g>
  </Svg>
);
const ShapeTwo = () => (
  <Svg w={200} h={60} vb="0 0 200 60">
    <path d="M84 8h6v43h-6" stroke="#000" strokeWidth="1.800" />
    <g fontFamily="Liberation Sans" fontSize="11" fill="#000">
      <text transform="translate(76,3) rotate(90)">1805</text>
      <text x="84" y="20">36</text>
      <text x="111" y="59">253</text>
    </g>
  </Svg>
);

type RowData = { num: string; bg?: string; h: number; cells: React.ReactNode[] };
const rows: RowData[] = [
  {
    num: "1*", bg: "#ffd28c", h: 61,
    cells: ["横向钢筋.1", "8", <Grade />, "0", <ShapeOne />, "40*d+2201+40*d", "端头+净长+端头", "(0)", "2841", "19", "0", "0", "1.122", "21.322", "直筋"],
  },
  {
    num: "2", h: 61,
    cells: ["横向钢筋.2", "10", <Grade />, "0", <ShapeTwo />, "2105", "净长", "(0)", "2105", "14", "0", "0", "1.299", "18.183", "直筋"],
  },
  {
    num: "3", h: 28,
    cells: ["水平纵筋.1", "6", <Grade />, "1", <Unit $c="#f00000"><Lat>1850</Lat></Unit>, "1870", "净长", "(0)", "1870", "24", "0", "0", "0.421", "10.101", "直筋"],
  },
];

export default function App() {
  return (
    <Window>
      <Global />
      <TitleBar>
        <Svg s={16}>
          <rect width="16" height="16" rx="2" fill="#1f8fe6" />
          <path d="M8 3v10M4 7c-1.500 1 0 3 1.500 2.500L11 7c2-1 3 1.500 1.500 2.500" stroke="#fff" strokeWidth="1.400" />
        </Svg>
        <TitleText>
          <TitleHead>广联达BIM钢筋算量软件 GGJ2013 - [C:\Users\Administrator.PC-20141127NRHM\Desktop\白龙村</TitleHead>
          <TitleSpan $ls={1.4} $fs={13}>-2018-02-03-20-08</TitleSpan>
          <TitleSpan $ls={1} $fs={13}>-17(266</TitleSpan>
          <TitleSpan $ml={-10}>8版).GGJ12]</TitleSpan>
        </TitleText>
        <WinControls>
          <WinBtn><Svg w={10} h={10} vb="0 0 10 10"><path d="M0 5.500h10" stroke="#111" /></Svg></WinBtn>
          <WinBtn><Svg w={10} h={10} vb="0 0 10 10"><path d="M2.500 2V.5h7v7H8M.5 2.500h7v7h-7z" stroke="#111" /></Svg></WinBtn>
          <WinBtn><Svg w={11} h={11} vb="0 0 11 11"><path d="M.5.5l10 10M10.500.5l-10 10" stroke="#111" /></Svg></WinBtn>
        </WinControls>
      </TitleBar>
      <Badge>69</Badge>
      <MenuBar>
        {["文件(F)", "编辑(E)", "楼层(L)", "构件(N)", "绘图(D)", "修改(M)", "钢筋量(Q)", "视图(V)", "工具(T)", "云应用(Y)", "BIM应用(I)", "在线服务(S)", "帮助(H)", "版本号(B)"].map((m) => (
          <MenuText key={m}>{m}</MenuText>
        ))}
        <MenuTool>
          <Svg s={16}>
            <path d="M3 1h7l3 3v11H3z" fill="#fff" stroke="#3277c6" />
            <circle cx="10.500" cy="12.500" r="3" fill="#35a544" />
            <path d="M10.500 10.500v4M8.500 12.500h4" stroke="#fff" />
          </Svg>
          <span>新建变更</span>
          <Caret />
        </MenuTool>
        <MenuTool>
          <Svg s={16}>
            <circle cx="8" cy="8" r="7" fill="#2d8ee8" />
            <circle cx="5.500" cy="6.500" r="1.500" fill="#fff" />
            <circle cx="10.500" cy="6.500" r="1.500" fill="#fff" />
            <path d="M5 10.500c1.500 1.500 4.500 1.500 6 0" stroke="#fff" />
          </Svg>
          <span>广小二</span>
        </MenuTool>
        <GhostBox />
        <UserBar>
          <Svg s={17}>
            <rect x="0" y="0" width="17" height="17" rx="2" fill="#4d8fd0" />
            <circle cx="8.500" cy="6" r="2.800" fill="#fff" />
            <path d="M3.500 14c0-5 10-5 10 0z" fill="#fff" />
          </Svg>
          <PhoneText>13907298339</PhoneText>
          <Caret />
          <UserText $ml={8} $mr={10}>造价豆:0</UserText>
          <IconPad $mr={9}>
            <Svg w={12} h={18} vb="0 0 12 18">
              <path d="M6 1C3 1 2 4 2 7s-1 5-2 6h12c-1-1-2-3-2-6s-1-6-4-6z" fill="#2d7fe0" />
              <circle cx="6" cy="15" r="2" fill="#2d7fe0" />
            </Svg>
          </IconPad>
          <Svg s={16}>
            <path d="M.5.5h15v12H7l-3 3v-3H.5z" fill="#fff" stroke="#2d7fe0" />
            <path d="M4 6.500h1M7.500 6.500h1M11 6.500h1" stroke="#2d7fe0" />
          </Svg>
          <UserText $ml={4} $mr={0}>我要建议</UserText>
        </UserBar>
      </MenuBar>
      <MainRow>
        <Group $w={151} $gap={6} $pl={4}>
          <Ic n="doc" />
          <IconCell $w={18}><Ic n="open" /></IconCell>
          <Caret />
          <Ic n="save" />
          <Sep />
          <IconCell $w={20}><Ic n="undo" /></IconCell>
          <Caret />
          <More>»</More>
        </Group>
        <Group $w={548} $ml={2} $pl={3} $gap={6}>
          <T i="define" t="定义" />
          <Tool><SigmaBox>Σ</SigmaBox><span>汇总计算</span></Tool>
          <T i="cloud" t="云检查" />
          <T i="flat" t="平齐板顶" off />
          <T i="binoc" t="查找图元" />
          <T i="glass" t="查看钢筋量" />
          <T i="batch" t="批量选择" />
          <More>»</More>
        </Group>
        <Group $ml={2} $pl={3} $w={662}>
          <T i="cube" t="三维" white caret />
          <T i="top" t="俯视" caret />
          <T i="orbit" t="动态观察" />
          <T i="local" t="局部三维" off />
          <Sep />
          <T i="full" t="全屏" />
          <T i="zoom" t="缩放" caret />
          <T i="pan" t="平移" caret />
          <T i="srot" t="屏幕旋转" caret />
          <Sep />
          <T i="floors" t="选择楼层" />
          <More>»</More>
        </Group>
      </MainRow>
      <Workspace>
        <Nav>
          <NavHead>
            <span>模块导航栏</span>
            <Svg w={32} h={12} vb="0 0 32 12">
              <path d="M9 1h4v5h1v1H8V6h1zM11 7v4" stroke="#fff" />
              <path d="M24.500 2l7 7M31.500 2l-7 7" stroke="#fff" />
            </Svg>
          </NavHead>
          <NavBtn>工程设置</NavBtn>
          <NavBtn>绘图输入</NavBtn>
          <NavTool>
            <Svg s={18} vb="0 0 18 18">
              <path d="M1.500 5h8M5.500 1v8" stroke="#111" strokeWidth="2.400" />
              <path d="M6 12h10M11 7.500v9" stroke="#2a8a4a" strokeWidth="2.400" />
            </Svg>
            <Svg s={18} vb="0 0 18 18">
              <path d="M1 4h8" stroke="#111" strokeWidth="2.400" />
              <path d="M8 11h9" stroke="#2a8a4a" strokeWidth="2.400" />
            </Svg>
          </NavTool>
          <Tree>
            <Root label={mix("常用构件类型")} open />
            <Kids>
              <Kid icon="grid" label="轴网(J)" />
              <Kid icon="raft" label="筏板基础(M)" />
              <Kid icon="col" label="框柱(Z)" />
              <Kid icon="shear" label="剪力墙(Q)" />
              <Kid icon="beam" label="梁(L)" />
              <Kid icon="slab" label="现浇板(B)" />
            </Kids>
            <Root label="轴线" />
            <Root label="柱" />
            <Root label="墙" open />
            <Kids>
              <Kid icon="shear" label="剪力墙(Q)" />
              <Kid icon="door" label="人防门框墙(RF)" />
              <Kid icon="brick" label="砌体墙(Q)" />
              <Kid icon="dark" label="暗梁(A)" />
              <Kid icon="rein" label="砌体加筋(Y)" />
            </Kids>
            <Root label="门窗洞" />
            <Root label="梁" />
            <Root label="板" />
            <Root label="基础" />
            <Root label="其它" />
            <Root label="自定义" open />
            <Kids>
              <Kid icon="xpt" label="自定义点" />
              <Kid icon="xline" label="自定义线(X)" sel extra={<><Cols /><New>NEW</New></>} />
              <Kid icon="xface" label="自定义面" />
              <Kid icon="dim2" label="尺寸标注(W)" />
            </Kids>
            <Root label={<><MonoLat>CAD</MonoLat>识别</>} extra={<><Space $w={6} /><Cols /><New>NEW</New></>} />
            <CursorMark width="12" height="15" viewBox="0 0 12 15">
              <path d="M1 1v11l3-2.500 2 4.500 2-1-2-4h4z" fill="#b8b8b8" stroke="#8a8a8a" />
            </CursorMark>
          </Tree>
          <NavBtn>单构件输入</NavBtn>
          <NavBtn>报表预览</NavBtn>
        </Nav>
        <Main>
          <Row $h={24} $mb={3}>
            <Group $h={24} $ml={2} $w={789} $pl={3}>
              <Grip />
              <T i="erase" t="删除" />
              <Sep />
              <T i="copy" t="复制" />
              <T i="mirror" t="镜像" />
              <Sep />
              <T i="move" t="移动" />
              <T i="rotate" t="旋转" />
              <Sep />
              <T i="extend" t="延伸" />
              <T i="trim" t="修剪" />
              <Sep />
              <T i="brk" t="打断" />
              <T i="merge" t="合并" />
              <T i="split" t="分割" off />
              <Sep />
              <T i="align" t="对齐" caret />
              <T i="offset" t="偏移" />
              <T i="stretch" t="拉伸" />
              <Sep />
              <T i="gripset" t="设置夹点" off />
            </Group>
          </Row>
          <Row $h={26} $mb={3}>
            <Group $ml={2} $w={565} $pl={7}>
              <ComboRow>
                <Combo $w={56} $h={26}>第2层<Caret /></Combo>
                <Combo $w={67} $h={26}>自定义<Caret /></Combo>
                <Combo $w={65} $h={26} $ml={1}>自定义线<Caret /></Combo>
                <Combo $w={68} $h={26} $ml={3}>ZDYX-49<Caret /></Combo>
              </ComboRow>
              <Sep />
              <T i="attr" t="属性" />
              <T i="edit" t="编辑钢筋" on />
              <T i="list" t="构件列表" />
              <T i="pick" t="拾取构件" />
            </Group>
            <Group $ml={42} $w={422} $pl={3} $h={26}>
              <Grip />
              <T i="two" t="两点" />
              <T i="par" t="平行" />
              <T i="ang" t="点角" caret />
              <T i="arc3" t="三点辅轴" caret />
              <T i="delax" t="删除辅轴" />
              <T i="dim" t="尺寸标注" caret />
            </Group>
          </Row>
          <Row $h={26} $mb={2}>
            <Group $ml={2} $w={487} $pl={9}>
              <Tool $on>
                <Ic n="cursor" />
                <span>选择</span>
              </Tool>
              <Caret />
              <Sep />
              <T i="line" t="直线" />
              <T i="ptlen" t="点加长度" />
              <T i="arc" t="三点画弧" caret />
              <Combo $w={54} $h={26} $ml={-4}><span /><Caret /></Combo>
              <T i="rect" t="矩形" />
              <Sep />
              <T i="smart" t="智能布置" caret />
            </Group>
            <Group $ml={1} $w={12} $pl={3}><Grip /></Group>
          </Row>
          <CanvasWrap>
            <Canvas />
            <Sogou>
              <SogouLogo>
                <Svg s={28} vb="0 0 28 28">
                  <path d="M2 5q0-1 1-1.500L22 .5q2-.3 2.500 1.500L28 22q.2 1.500-1.500 2L6 27q-1.500.2-2-1.500z" fill="#f0531f" />
                  <path d="M21 9c-4-3-12-2-12 1.500 0 4 11 2 11 6.500 0 4-8 4-12 1" stroke="#fff" strokeWidth="3.200" />
                </Svg>
              </SogouLogo>
              <SogouBar>
                <Svg s={16}><path d="M1 15L8 2l7 13M4 10.500h8" stroke="#2272c4" strokeWidth="1.800" /></Svg>
                <Svg s={16}><circle cx="5" cy="6" r="1.500" fill="#2272c4" /><path d="M12 7c1 2 0 4-1 5" stroke="#2272c4" strokeWidth="1.500" /></Svg>
                <Svg s={16}><circle cx="8" cy="8" r="7" stroke="#2272c4" strokeWidth="1.500" /><circle cx="5.500" cy="6" r="1" fill="#2272c4" /><circle cx="10.500" cy="6" r="1" fill="#2272c4" /><path d="M4.500 10c2 2.500 5 2.500 7 0" stroke="#2272c4" /></Svg>
                <Svg s={16}><rect x="5.500" y="1" width="5" height="9" rx="2.500" fill="#2272c4" /><path d="M3 7c0 6 10 6 10 0M8 12v3M5 15h6" stroke="#2272c4" /></Svg>
                <Svg s={16}><rect x="1" y="3" width="14" height="10" rx="1" fill="#2272c4" /><path d="M3 6h10M3 8.500h10M5 11h6" stroke="#fff" strokeDasharray="1 1" /></Svg>
                <Svg s={16}><circle cx="7" cy="4" r="3" fill="#c0c8d4" /><path d="M1 14c0-6 10-6 10 0z" fill="#c0c8d4" /><rect x="7" y="10" width="8" height="5" fill="#dfe4ea" /></Svg>
                <Svg s={16}><path d="M5 2L1 5l2 3 2-1v7h6V7l2 1 2-3-4-3-3 1z" fill="#2272c4" /></Svg>
                <Svg s={16}><path d="M14 5l-3 2-2-2 2-3c-3-1-5 1-4.500 4L1 11.500 3.500 14 9 9c3 .5 5-1 5-4z" fill="#2272c4" /></Svg>
              </SogouBar>
            </Sogou>
          </CanvasWrap>
          <Row $h={27} $mb={4}>
            <Group $h={27} $ml={2} $w={472} $pl={3}>
              <Grip />
              <T i="ortho" t="正交" />
              <T i="snap" t="对象捕捉" on />
              <T i="dyn" t="动态输入" />
              <Space $w={-1.5} />
              <Grip />
              <T i="cross" t="交点" />
              <T i="perp" t="垂点" on />
              <T i="mid" t="中点" on />
              <T i="vertex" t="顶点" />
              <T i="coord" t="坐标" />
            </Group>
            <Group $h={27} $ml={3} $w={410} $pl={6} $gap={2}>
              <Combo $w={59} $h={24}>不偏移<Caret /></Combo>
              <Sep />
              <Space $w={5} />
              <Unit>X=</Unit>
              <SpinBox $w={58}>0<SpinArrows><ArrowUp /><ArrowDown /></SpinArrows></SpinBox>
              <Unit>mm</Unit>
              <Space $w={2} />
              <Unit>Y=</Unit>
              <SpinBox $w={58}>0<SpinArrows><ArrowUp /><ArrowDown /></SpinArrows></SpinBox>
              <Unit>mm</Unit>
              <Sep />
              <Space $w={7} />
              <Check />
              <Space $w={5} />
              <span>旋转</span>
              <Space $w={0} />
              <SpinBox $w={68}>0.000<SpinArrows><ArrowUp /><ArrowDown /></SpinArrows></SpinBox>
              <Unit>°</Unit>
            </Group>
          </Row>
          <RebarArea>
            <Handle>
              <Svg s={12} vb="0 0 12 12">{ICONS.closeX}</Svg>
              <HandleDots />
            </Handle>
            <RebarCol>
              <RebarBar>
                <FirstIcon><Ic n="first" /></FirstIcon>
                <Ic n="prev" />
                <Ic n="next" />
                <Ic n="last" />
                <Sep />
                <Ic n="up" />
                <Ic n="down" />
                <Sep />
                <T i="insert" t="插入" off />
                <T i="del" t="删除" off />
                <Space $w={-9} />
                <T i="scale" t="缩尺配筋" off />
                <T i="info" t="钢筋信息" />
                <T i="lib" t="钢筋图库" />
                <Space $w={-9} />
                <T i="other" t="其他" caret />
                <Space $w={-9} />
                <BarText>关闭</BarText>
                <Sep />
                <TotalText>单构件钢筋总重(kg)：49.606</TotalText>
              </RebarBar>
              <TableFrame>
                <TableTop>
                  <GridBox>
                    <TRow $h={20}>
                      {headers.map((h, i) => (
                        <Th key={i} $active={i === 2}>{headerText(h)}</Th>
                      ))}
                    </TRow>
                    {rows.map((r) => (
                      <TRow key={r.num} $h={r.h}>
                        <Td $bg={r.bg ?? "#f6f6f6"} $center>
                          <Lat style={r.bg ? { color: "#6a0a6a" } : undefined}>{r.num}</Lat>
                        </Td>
                        {r.cells.map((c, i) => (
                          <Td
                            key={i}
                            $split={i === 0}
                            $center={i === 2 || i === 4}
                            $bg={r.num === "1*" && i === 1 ? "#aeead6" : undefined}
                          >
                            {typeof c === "string" ? mix(c) : c}
                          </Td>
                        ))}
                      </TRow>
                    ))}
                  </GridBox>
                  <VScroll>
                    <Svg w={9} h={6} vb="0 0 9 6"><path d="M1 5l3.500-3.500L8 5" stroke="#555" strokeWidth="1.500" /></Svg>
                    <VThumb />
                    <Svg w={9} h={6} vb="0 0 9 6"><path d="M1 1l3.500 3.500L8 1" stroke="#555" strokeWidth="1.500" /></Svg>
                  </VScroll>
                </TableTop>
                <HScroll>
                  <Svg w={6} h={9} vb="0 0 6 9"><path d="M5 1L1.500 4.500 5 8" stroke="#555" strokeWidth="1.500" /></Svg>
                  <HThumb />
                  <Svg w={6} h={9} vb="0 0 6 9"><path d="M1 1l3.500 3.500L1 8" stroke="#555" strokeWidth="1.500" /></Svg>
                </HScroll>
              </TableFrame>
            </RebarCol>
          </RebarArea>
        </Main>
      </Workspace>
      <StatusBar>
        <StatusCell $w={147}><Lat>X=88879 Y=5878</Lat></StatusCell>
        <StatusCell $w={78}>{mix("层高:4.5m")}</StatusCell>
        <StatusCell $w={98}>{mix("底标高:4.45m")}</StatusCell>
        <StatusCell $w={48}>{mix("1(1)")}</StatusCell>
        <StatusCell $w={913}>按鼠标左键指定第一个角点，或拾取构件图元</StatusCell>
        <StatusCell $w={70}>{mix("480.1 FPS")}</StatusCell>
      </StatusBar>
      <Taskbar>
        <Start>
          <Svg s={17} vb="0 0 17 17">
            <path d="M0 2.500L7 1.500V8H0zM8 1.400L17 0v8H8zM0 9h7v6.500L0 14.500zM8 9h9v8l-9-1.400z" fill="#fff" />
          </Svg>
        </Start>
        <Search>
          <Svg s={22} vb="0 0 22 22"><circle cx="11" cy="11" r="9" stroke="#111" strokeWidth="2.500" /></Svg>
          <span>在这里输入你要搜索的内容</span>
          <MicBox>
            <Svg s={16}><rect x="5.500" y="1" width="5" height="9" rx="2.500" stroke="#333" /><path d="M3 7c0 6 10 6 10 0M8 12v3M5 15h6" stroke="#333" /></Svg>
          </MicBox>
        </Search>
        <TaskItem $w={48}>
          <Svg s={16}><path d="M0 1.500h11M0 14.500h11M3 4.500h6v7H3zM13 1v5M13 10v5" stroke="#fff" /></Svg>
        </TaskItem>
        <TaskItem $w={48} $ml={2}>
          <Svg s={22} vb="0 0 22 22">
            <path d="M11 11C6 11 3 8 3 5c0-3 6-3 8 0 1 2 0 4 0 6zM11 11c0-5 3-8 6-8 3 0 3 6 0 8-2 1-4 0-6 0zM11 11c5 0 8 3 8 6 0 3-6 3-8 0-1-2 0-4 0-6zM11 11c0 5-3 8-6 8-3 0-3-6 0-8 2-1 4 0 6 0z" fill="#e6ecef" />
          </Svg>
        </TaskItem>
        <IESearch>
          <Svg s={20} vb="0 0 20 20">
            <circle cx="10" cy="10" r="6" stroke="#2a9be8" strokeWidth="3" />
            <path d="M3 10h13" stroke="#2a9be8" strokeWidth="2" />
            <path d="M17 3c2 3-3 6-5 3" stroke="#f5b52c" strokeWidth="1" />
          </Svg>
          <span>搜索网页和文件</span>
          <MicBox>
            <Svg s={16}><circle cx="7" cy="7" r="6" stroke="#9aa3a6" strokeWidth="1.200" /><path d="M11 11l4 4" stroke="#9aa3a6" strokeWidth="1.200" /></Svg>
          </MicBox>
        </IESearch>
        <TaskItem $w={54}>
          <Svg s={24} vb="0 0 24 24">
            <circle cx="11" cy="14" r="7" stroke="#dfe4e6" strokeWidth="1.600" />
            <circle cx="11" cy="14" r="3.500" stroke="#dfe4e6" strokeWidth="1.400" />
            <path d="M19 2c-3 0-3 3-4 5h8c-1-2-1-5-4-5z" fill="#f0b428" />
          </Svg>
        </TaskItem>
        <TaskItem $w={48} $active $under>
          <Svg s={24} vb="0 0 24 24">
            <rect width="24" height="24" rx="4" fill="#0f90ee" />
            <path d="M12 5v14M6 10c-2 2 0 4 2 3l8-3c3-1 4 2 2 3" stroke="#fff" strokeWidth="2" />
          </Svg>
        </TaskItem>
        <TaskItem $w={40} $ml={5} $under>
          <Svg s={26} vb="0 0 26 26">
            <path d="M21 4c-9-4-16 3-15 11 1 8 11 11 15 4 2-4-2-8-7-6l3 3c-3 3-7 0-6-4 1-5 7-7 10-8z" fill="#1f9cf0" />
          </Svg>
        </TaskItem>
        <ScrollBox>
          <Svg w={9} h={6} vb="0 0 9 6"><path d="M1 5l3.500-3.500L8 5" stroke="#444" strokeWidth="1.400" /></Svg>
          <Svg w={9} h={6} vb="0 0 9 6"><path d="M1 1l3.500 3.500L8 1" stroke="#444" strokeWidth="1.400" /></Svg>
        </ScrollBox>
        <TaskItem $w={30} $ml={15}>
          <Svg s={16}><circle cx="5" cy="8" r="2.500" stroke="#fff" /><circle cx="10.500" cy="4" r="2.500" stroke="#fff" /><path d="M1 15c0-4 7-4 7 0M9 7c3 0 5 2 5 4" stroke="#fff" /></Svg>
        </TaskItem>
        <TwoLine $w={60} $ml={17}>49%<br />CPU使用</TwoLine>
        <TaskItem $w={16} $ml={13}>
          <Svg s={14} vb="0 0 14 14"><path d="M1 10l6-6 6 6" stroke="#fff" /></Svg>
        </TaskItem>
        <TaskItem $w={16} $ml={8}>
          <Svg s={16}><rect x="3.500" y="5" width="11" height="7" stroke="#fff" /><path d="M5 2v4M8 2v4M3 6h5v2c0 2-2 2-2 4" stroke="#fff" /></Svg>
        </TaskItem>
        <TaskItem $w={16} $ml={9}>
          <Svg s={16}><path d="M2 13l1 1M1 9c3-2 5 0 6 5M1 5c6-3 9 2 10 9M1 2c8-2 13 4 13 12" stroke="#bbb" strokeDasharray="1.500 .8" /></Svg>
        </TaskItem>
        <TaskItem $w={16} $ml={6}>
          <Svg s={16}><path d="M2 6h3l4-3v10l-4-3H2z" stroke="#fff" /><path d="M11 5c1.500 2 1.500 4 0 6" stroke="#fff" /></Svg>
        </TaskItem>
        <TaskItem $w={24} $ml={8}>
          <Svg w={24} h={16} vb="0 0 24 16"><rect x=".5" y="1.500" width="23" height="13" stroke="#fff" /><path d="M3 5h18M3 8h18" stroke="#fff" strokeDasharray="1.500 1" /><path d="M6 11.500h12" stroke="#fff" /></Svg>
        </TaskItem>
        <BigA>A</BigA>
        <TaskItem $w={16} $ml={12}>
          <Svg s={17} vb="0 0 16 16"><path d="M2 2l12-1 1 12-12 2z" fill="#ea5a1c" /><path d="M12 5c-2-2-7-2-7 0s6 1 6 4-5 3-7 1" stroke="#fff" strokeWidth="1.800" /></Svg>
        </TaskItem>
        <TwoLine $w={65} $ml={16}>12:44<br />2018/11/18</TwoLine>
        <Notify>
          <Svg s={18} vb="0 0 18 18"><path d="M1 3h14v10H9l-3 3v-3H1z" fill="#fff" /><path d="M4 6h8M4 8.500h8M4 11h8" stroke="#555" /></Svg>
          <NotifyCount>1</NotifyCount>
        </Notify>
      </Taskbar>
    </Window>
  );
}
